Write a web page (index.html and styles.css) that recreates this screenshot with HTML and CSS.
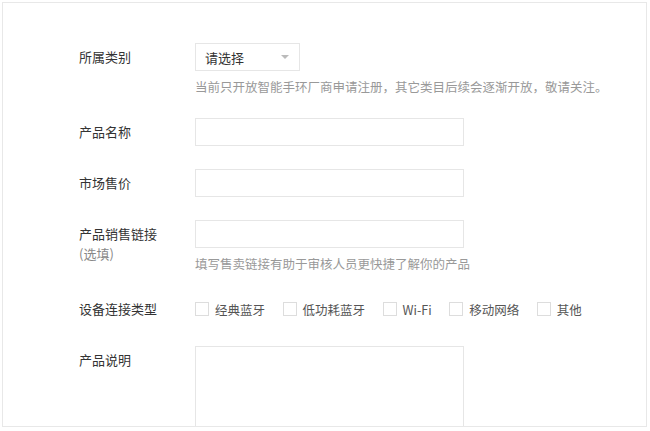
FILE: index.html
```html
<!DOCTYPE html>
<html lang="zh-CN">
<head>
<meta charset="utf-8">
<link rel="stylesheet" href="styles.css">
</head>
<body>
<div class="page">
  <div class="row">
    <div class="label">所属类别</div>
    <div class="field">
      <div class="select"><span>请选择</span><i class="caret"></i></div>
      <div class="hint">当前只开放智能手环厂商申请注册，其它类目后续会逐渐开放，敬请关注。</div>
    </div>
  </div>
  <div class="row">
    <div class="label">产品名称</div>
    <div class="field"><div class="input"></div></div>
  </div>
  <div class="row">
    <div class="label">市场售价</div>
    <div class="field"><div class="input"></div></div>
  </div>
  <div class="row">
    <div class="label">产品销售链接<br><span class="sub">(选填)</span></div>
    <div class="field">
      <div class="input"></div>
      <div class="hint">填写售卖链接有助于审核人员更快捷了解你的产品</div>
    </div>
  </div>
  <div class="row">
    <div class="label">设备连接类型</div>
    <div class="field checks">
      <label class="check"><i class="box"></i>经典蓝牙</label>
      <label class="check"><i class="box"></i>低功耗蓝牙</label>
      <label class="check"><i class="box"></i>Wi-Fi</label>
      <label class="check"><i class="box"></i>移动网络</label>
      <label class="check"><i class="box"></i>其他</label>
    </div>
  </div>
  <div class="row">
    <div class="label">产品说明</div>
    <div class="field"><div class="textarea"></div></div>
  </div>
</div>
</body>
</html>
```

FILE: styles.css
```css
html, body {
  margin: 0;
  padding: 0;
  background: #fff;
}
body {
  font-family: "Noto Sans CJK SC", "Liberation Sans", sans-serif;
  font-size: 13px;
  color: #333;
}
.page {
  margin: 2px 0 0 2px;
  width: 645px;
  height: 425px;
  border: 1px solid #e8e8e8;
  overflow: hidden;
  padding: 40px 0 0 76px;
  box-sizing: border-box;
}
.row {
  display: flex;
  margin-bottom: 23px;
}
.label {
  width: 116px;
  flex: none;
  padding-top: 4px;
  line-height: 20px;
  color: #333;
}
.label .sub {
  color: #888;
}
.field {
  flex: none;
}
.select {
  width: 105px;
  height: 28px;
  box-sizing: border-box;
  border: 1px solid #e6e6e6;
  display: flex;
  align-items: center;
  justify-content: space-between;
  padding: 0 9px 0 9px;
  color: #333;
}
.caret {
  width: 0;
  height: 0;
  border-left: 4px solid transparent;
  border-right: 4px solid transparent;
  border-top: 4px solid #bbb;
  margin-right: 1px;
}
.hint {
  margin-top: 8px;
  line-height: 16px;
  font-size: 12.5px;
  color: #999;
  white-space: nowrap;
}
.input {
  width: 269px;
  height: 28px;
  box-sizing: border-box;
  border: 1px solid #e6e6e6;
}
.checks {
  display: flex;
  align-items: center;
  height: 28px;
}
.check {
  display: flex;
  align-items: center;
  color: #555;
  font-size: 12.5px;
  margin-right: 17.5px;
}
.check .box {
  width: 14px;
  height: 14px;
  box-sizing: border-box;
  border: 1px solid #ddd;
  margin-right: 6px;
  background: #fff;
}
.textarea {
  width: 269px;
  height: 110px;
  box-sizing: border-box;
  border: 1px solid #e6e6e6;
}
```
